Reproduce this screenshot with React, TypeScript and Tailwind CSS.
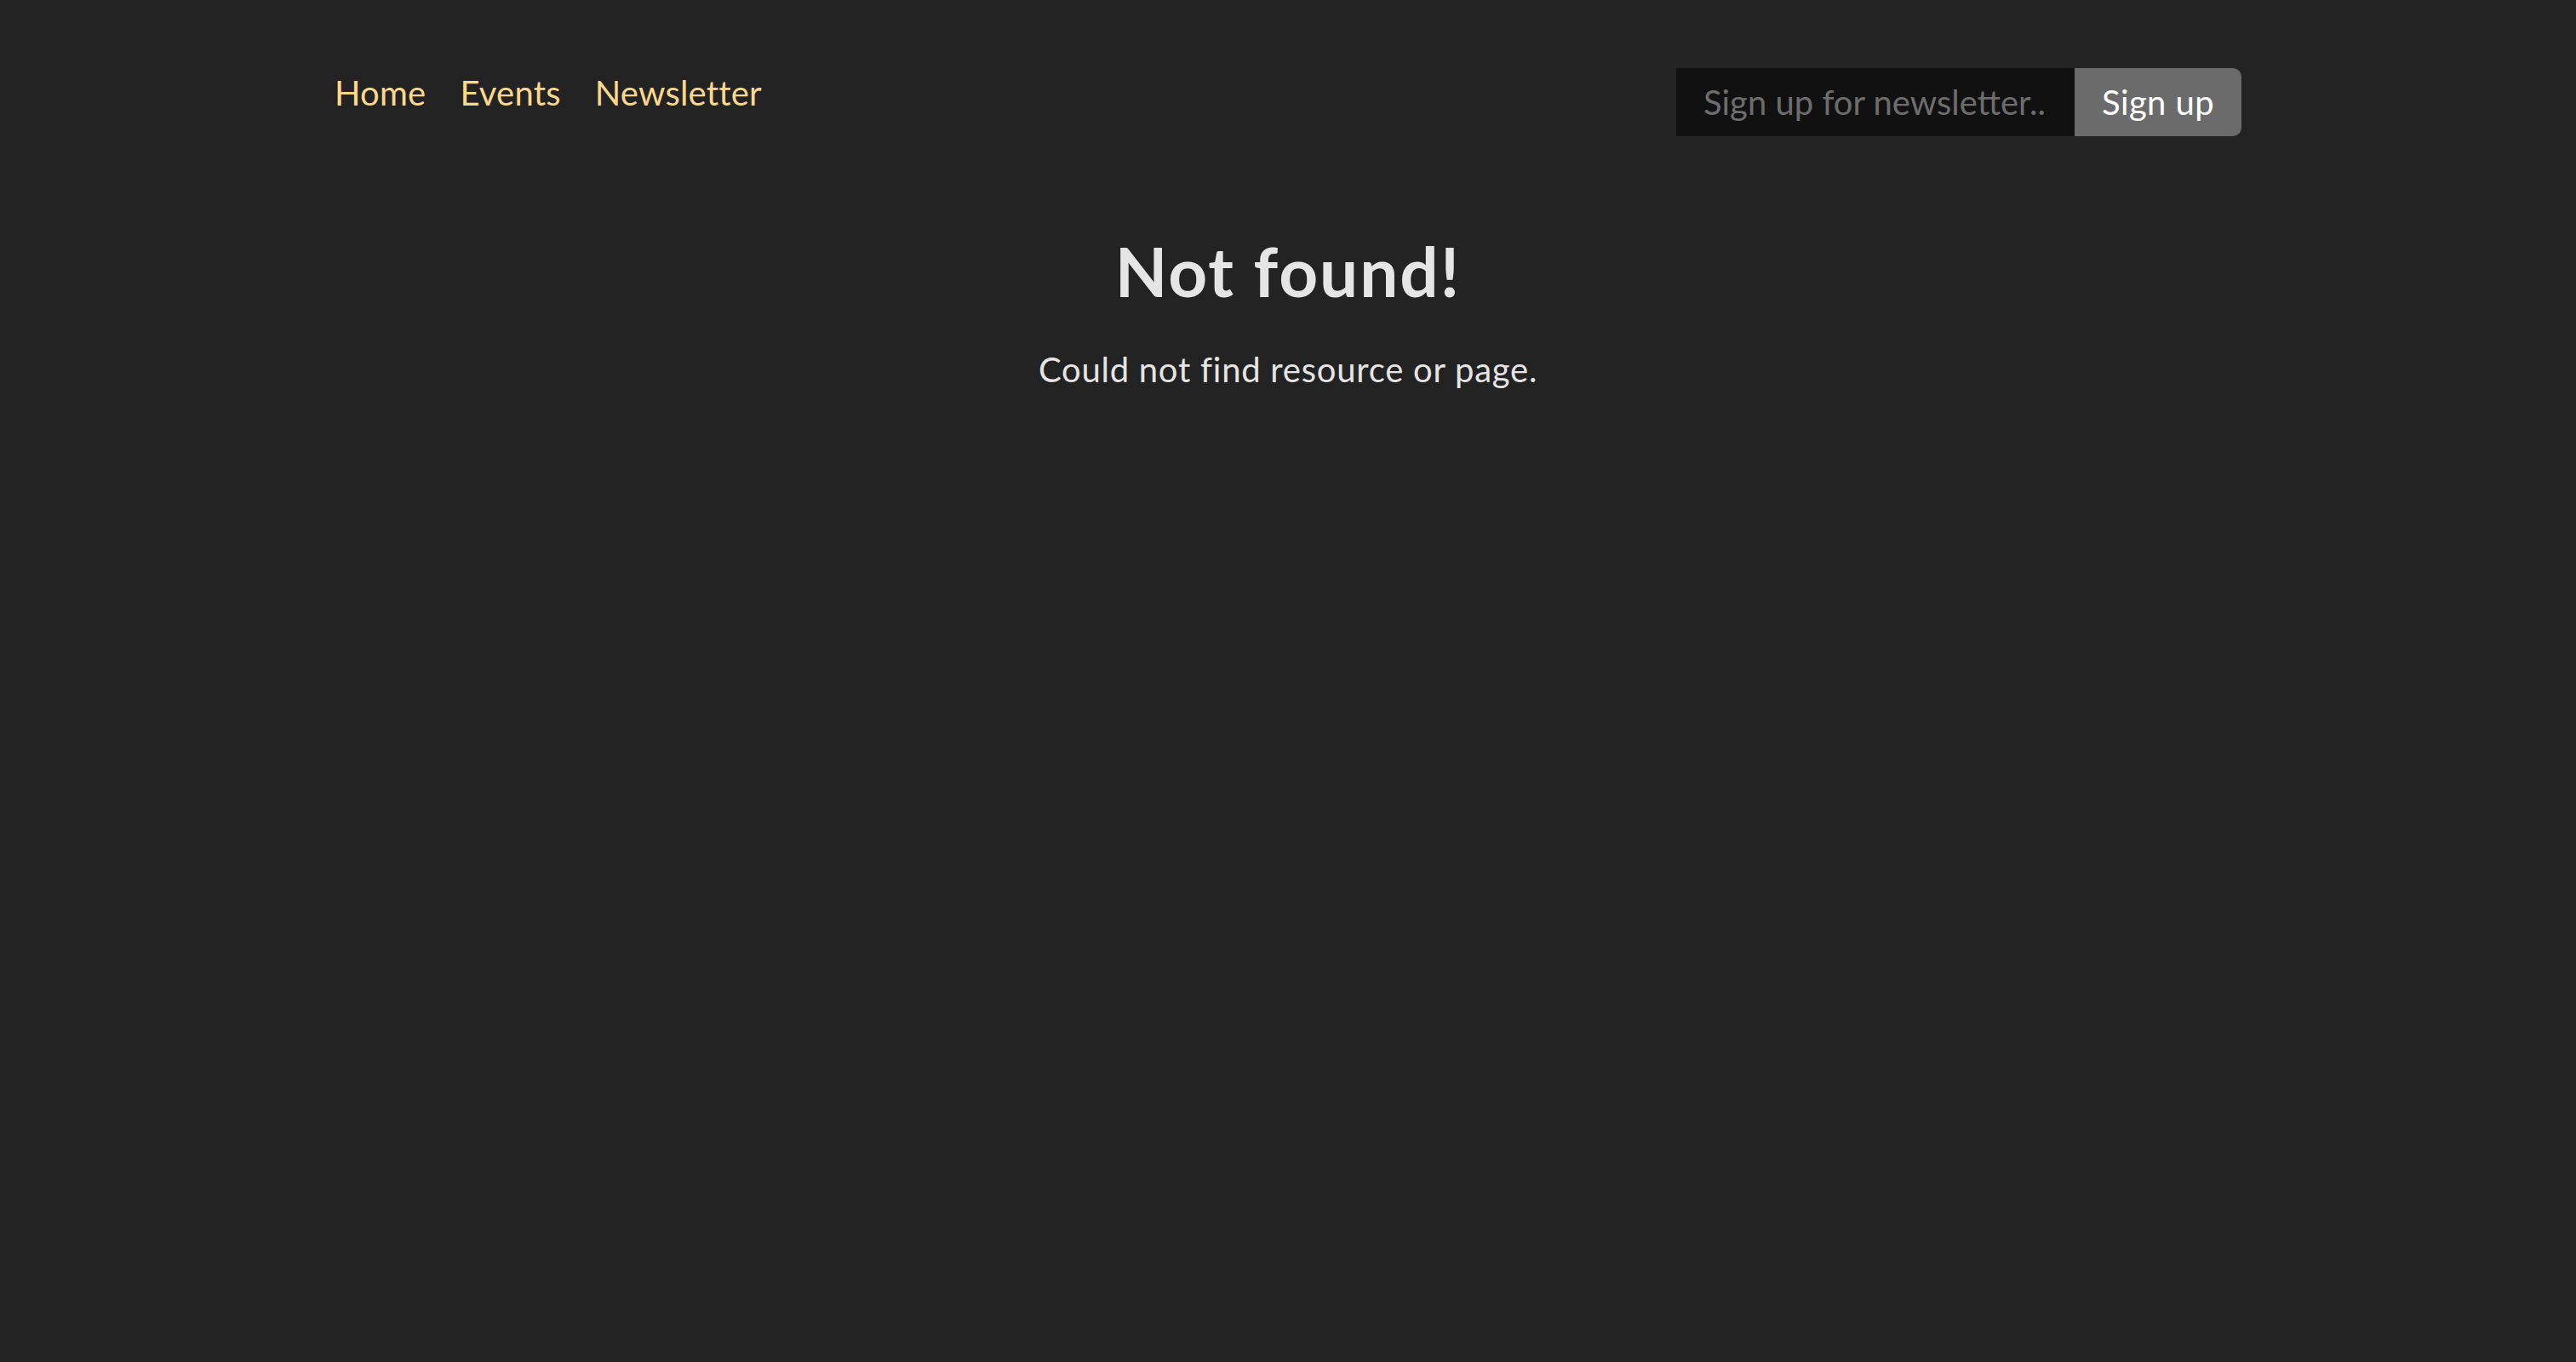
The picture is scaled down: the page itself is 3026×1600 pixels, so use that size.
import React from 'react';

const font = { fontFamily: 'Lato, "Noto Sans", sans-serif' };

const NavLink: React.FC<{ label: string }> = ({ label }) => (
  <li>
    <a href="#" className="text-[#fbd88d] text-[40px] leading-[1.5] tracking-[0.2px]">
      {label}
    </a>
  </li>
);

export default function App() {
  return (
    <div className="min-h-screen bg-[#232323]" style={font}>
      <header className="w-[2240px] mx-auto pt-[79px] flex justify-between items-start">
        <nav>
          <ul className="flex gap-[40px]">
            <NavLink label="Home" />
            <NavLink label="Events" />
            <NavLink label="Newsletter" />
          </ul>
        </nav>
        <form className="flex mt-[1px]" onSubmit={(e) => e.preventDefault()}>
          <input
            type="email"
            placeholder="Sign up for newsletter.."
            className="w-[468px] h-[80px] bg-[#111111] pl-[32px] pr-[16px] text-[40px] text-white placeholder:text-[#6d6d6d] outline-none"
          />
          <button
            type="submit"
            className="w-[196px] h-[80px] bg-[#6b6b6b] text-white text-[40px] tracking-[0.4px] rounded-r-[10px]"
          >
            Sign up
          </button>
        </form>
      </header>

      <main className="mt-[110px] flex flex-col items-center text-[#e5e5e5]">
        <h1 className="text-[80px] font-bold leading-[1.2] tracking-[2px]">Not found!</h1>
        <p className="mt-[38px] text-[40px] leading-[1.5] tracking-[0.75px]">
          Could not find resource or page.
        </p>
      </main>
    </div>
  );
}
